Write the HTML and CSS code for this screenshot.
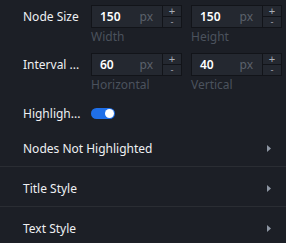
FILE: index.html
```html
<!DOCTYPE html>
<html lang="en">
<head>
    <meta charset="UTF-8">
    <title>Node Settings</title>
    <link rel="stylesheet" href="styles.css">
</head>
<body>
    <div class="panel">
        <div class="field-row">
            <div class="field-label">Node Size</div>
            <div class="field-inputs">
                <div class="num-group">
                    <div class="num-box">
                        <div class="num-input"><span class="num-value">150</span><span class="num-unit">px</span></div>
                        <div class="stepper"><span>+</span><span>-</span></div>
                    </div>
                    <div class="num-caption">Width</div>
                </div>
                <div class="num-group">
                    <div class="num-box">
                        <div class="num-input"><span class="num-value">150</span><span class="num-unit">px</span></div>
                        <div class="stepper"><span>+</span><span>-</span></div>
                    </div>
                    <div class="num-caption">Height</div>
                </div>
            </div>
        </div>

        <div class="field-row">
            <div class="field-label">Interval ...</div>
            <div class="field-inputs">
                <div class="num-group">
                    <div class="num-box">
                        <div class="num-input"><span class="num-value">60</span><span class="num-unit">px</span></div>
                        <div class="stepper"><span>+</span><span>-</span></div>
                    </div>
                    <div class="num-caption">Horizontal</div>
                </div>
                <div class="num-group">
                    <div class="num-box">
                        <div class="num-input"><span class="num-value">40</span><span class="num-unit">px</span></div>
                        <div class="stepper"><span>+</span><span>-</span></div>
                    </div>
                    <div class="num-caption">Vertical</div>
                </div>
            </div>
        </div>

        <div class="switch-row">
            <div class="field-label">Highligh...</div>
            <div class="switch on"><div class="switch-knob"></div></div>
        </div>

        <div class="collapse-item">
            <span>Nodes Not Highlighted</span>
            <svg class="chevron" width="4" height="7" viewBox="0 0 4 7"><polygon points="0,0 4,3.5 0,7"/></svg>
        </div>
        <div class="collapse-item">
            <span>Title Style</span>
            <svg class="chevron" width="4" height="7" viewBox="0 0 4 7"><polygon points="0,0 4,3.5 0,7"/></svg>
        </div>
        <div class="collapse-item">
            <span>Text Style</span>
            <svg class="chevron" width="4" height="7" viewBox="0 0 4 7"><polygon points="0,0 4,3.5 0,7"/></svg>
        </div>
    </div>
</body>
</html>
```

FILE: styles.css
```css
:root {
    --backgroundColor: #1c1f26;
    --boxColor: #242830;
    --borderColor: #121419;
    --textColor: #ffffff;
    --mutedColor: #4b525d;
    --accentColor: #1f6fe8;
}

body {
    margin: 0;
    padding: 0;
    font-family: 'Noto Sans', 'Liberation Sans', sans-serif;
    font-size: 12px;
    background: var(--backgroundColor);
    color: var(--textColor);
    overflow: hidden;
}

.panel {
    padding-top: 5px;
}

.field-row {
    display: flex;
    align-items: flex-start;
    padding-left: 23px;
    height: 48px;
}

.field-label {
    width: 68px;
    height: 23px;
    line-height: 23px;
    color: #eef0f3;
    white-space: nowrap;
}

.field-inputs {
    display: flex;
    gap: 9px;
}

.num-group {
    width: 91px;
}

.num-box {
    display: flex;
    height: 23px;
    box-sizing: border-box;
    border: 1px solid var(--borderColor);
    background: var(--boxColor);
}

.num-input {
    flex: 1;
    display: flex;
    align-items: center;
    justify-content: space-between;
    padding: 0 9px 0 8px;
    border-right: 1px solid var(--borderColor);
}

.num-value {
    font-weight: 600;
    color: #ffffff;
}

.num-unit {
    color: #5b616b;
}

.stepper {
    width: 18px;
    display: flex;
    flex-direction: column;
}

.stepper span {
    flex: 1;
    display: flex;
    align-items: center;
    justify-content: center;
    font-family: 'Liberation Sans', sans-serif;
    font-size: 9px;
    line-height: 9px;
    color: #a9aeb6;
    overflow: hidden;
}

.stepper span:first-child {
    border-bottom: 1px solid var(--borderColor);
    font-size: 11px;
}

.num-caption {
    margin-top: 1px;
    color: var(--mutedColor);
    line-height: 15px;
}

.switch-row {
    display: flex;
    align-items: center;
    padding-left: 23px;
    height: 27px;
    margin-top: -1px;
}

.switch {
    position: relative;
    width: 24px;
    height: 11px;
    border-radius: 6px;
    background: var(--accentColor);
}

.switch-knob {
    position: absolute;
    top: 1px;
    right: 1px;
    width: 9px;
    height: 9px;
    border-radius: 50%;
    background: #ffffff;
}

.collapse-item {
    display: flex;
    align-items: center;
    justify-content: space-between;
    height: 40px;
    box-sizing: border-box;
    padding: 3px 15px 0 23px;
    border-bottom: 1px solid #2a2d33;
    color: #eef0f3;
}

.chevron {
    fill: #8d96a3;
}
```
